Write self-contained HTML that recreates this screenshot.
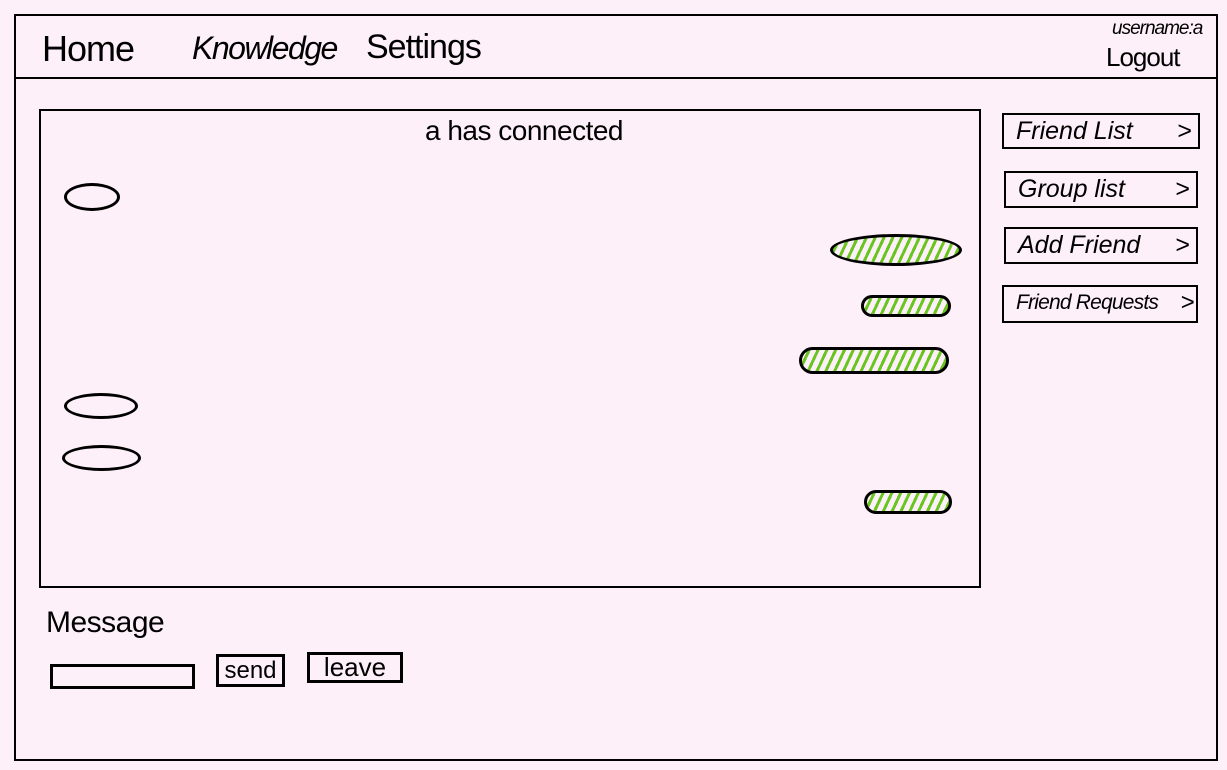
<!DOCTYPE html>
<html><head><meta charset="utf-8"><style>
*{margin:0;padding:0;box-sizing:border-box}
body{width:1227px;height:770px;background:#fdf0f8;position:relative;overflow:hidden;font-family:"Liberation Sans",sans-serif;color:#000}
.a{position:absolute}
.box{position:absolute;border:2px solid #000}
.t{position:absolute;white-space:nowrap}
.bub{position:absolute;border:3px solid #000;border-radius:50%}
.g{background:repeating-linear-gradient(115deg,transparent 0 5px,#6ac520 5px 8px);}
.side{position:absolute;border:2px solid #000;font-size:25px;padding-left:12px;line-height:32px;font-style:italic;white-space:nowrap}
.side span{position:absolute;right:6px;font-style:normal}
</style></head><body>
<div class="box" style="left:14px;top:14px;width:1204px;height:747px"></div>
<div class="a" style="left:14px;top:77px;width:1204px;height:2px;background:#000"></div>
<div class="t" style="left:42px;top:28px;font-size:36px;letter-spacing:-1px">Home</div>
<div class="t" style="left:192px;top:30px;font-size:32px;font-style:italic;letter-spacing:-1.5px">Knowledge</div>
<div class="t" style="left:366px;top:28px;font-size:34px;letter-spacing:-1px">Settings</div>
<div class="t" style="left:1112px;top:18px;font-size:19px;font-style:italic;letter-spacing:-1px">username:a</div>
<div class="t" style="left:1106px;top:42px;font-size:26px;letter-spacing:-1px">Logout</div>
<div class="box" style="left:39px;top:109px;width:942px;height:479px"></div>
<div class="t" style="left:425px;top:115px;font-size:28px;letter-spacing:-0.5px">a has connected</div>
<div class="bub" style="left:64px;top:183px;width:56px;height:28px"></div>
<div class="bub g" style="left:830px;top:234px;width:132px;height:32px"></div>
<div class="bub g" style="left:861px;top:295px;width:90px;height:22px;border-radius:12px"></div>
<div class="bub g" style="left:799px;top:347px;width:150px;height:27px;border-radius:14px"></div>
<div class="bub" style="left:64px;top:393px;width:74px;height:26px"></div>
<div class="bub" style="left:62px;top:445px;width:79px;height:26px"></div>
<div class="bub g" style="left:864px;top:490px;width:88px;height:24px;border-radius:12px"></div>
<div class="side" style="left:1002px;top:113px;width:198px;height:36px">Friend List<span>&gt;</span></div>
<div class="side" style="left:1004px;top:171px;width:194px;height:37px">Group list<span>&gt;</span></div>
<div class="side" style="left:1004px;top:227px;width:194px;height:37px">Add Friend<span>&gt;</span></div>
<div class="side" style="left:1002px;top:285px;width:196px;height:38px;font-size:21px;padding-left:12px;letter-spacing:-0.8px">Friend Requests<span style="right:2px;font-size:24px">&gt;</span></div>
<div class="t" style="left:46px;top:606px;font-size:30px;letter-spacing:-0.5px">Message</div>
<div class="box" style="left:50px;top:664px;width:145px;height:25px;border-width:3px"></div>
<div class="box" style="left:216px;top:654px;width:69px;height:33px;border-width:3px;font-size:24px;text-align:center;line-height:27px">send</div>
<div class="box" style="left:307px;top:652px;width:96px;height:31px;border-width:3px;font-size:26px;text-align:center;line-height:25px">leave</div>
</body></html>
